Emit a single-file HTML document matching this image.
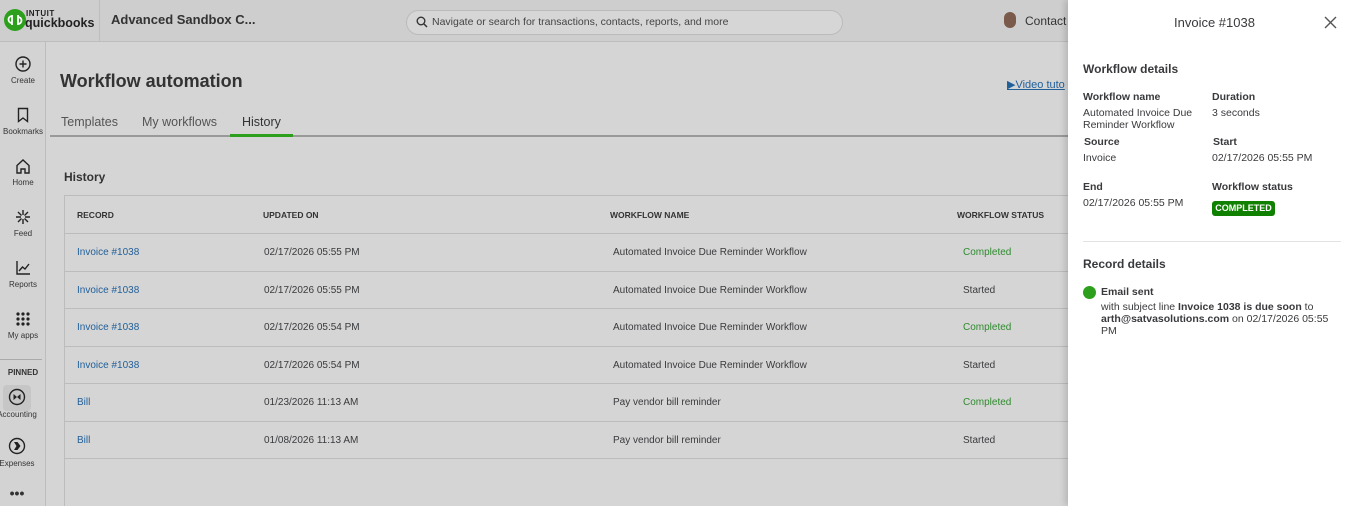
<!DOCTYPE html>
<html style="width:1349px;height:506px;overflow:hidden"><head><style>
*{box-sizing:border-box;margin:0;padding:0}
body{width:1349px;height:506px;overflow:hidden;background:#d5d5d5;font-family:"Liberation Sans",sans-serif;position:relative;color:#393a3d}
.abs{position:absolute}
.hdr{left:0;top:0;width:1349px;height:42px;background:#cecece;border-bottom:1px solid #bdbdbd}
.logo{left:0;top:0;width:100px;height:42px;border-right:1px solid #bdbdbd}
.side{left:0;top:42px;width:46px;height:464px;border-right:1px solid #bdbdbd;background:#d3d3d3}
.si{position:absolute;left:0;width:46px;text-align:center;font-size:8px;color:#333}
.si svg{display:block;margin:0 auto 4px}
.tab{font-size:12.5px;color:#555;top:115px}
.row{position:absolute;left:65px;width:1010px;height:38px;border-bottom:1px solid #bcbcbc;font-size:10px}
.row span{position:absolute;top:13px}
.lnk{color:#1f5f9a}
.grn{color:#2e8b2e}
.pl{font-size:10.5px;color:#393a3d}
.pl b{font-weight:bold;color:#393a3d}
</style></head><body>
<div class="abs hdr"></div>
<div class="abs logo">
<svg class="abs" style="left:4px;top:9px" width="22" height="22" viewBox="0 0 22 22"><circle cx="11" cy="11" r="11" fill="#2ca01c"/><path d="M8 6v10M8 7a3.5 3.5 0 1 0 0 7M14 6v10M14 8a3.5 3.5 0 1 1 0 7" stroke="#fff" stroke-width="1.8" fill="none"/></svg>
<div class="abs" style="left:26px;top:9px;font-size:8px;font-weight:bold;letter-spacing:.5px;color:#222">INTUIT</div>
<div class="abs" style="left:25px;top:16px;font-size:12.5px;font-weight:bold;color:#222">quickbooks</div>
</div>
<div class="abs" style="left:111px;top:12px;font-size:13px;font-weight:bold;color:#333">Advanced Sandbox C...</div>
<div class="abs" style="left:406px;top:10px;width:437px;height:25px;border:1px solid #bbb;border-radius:13px;background:#d6d6d6"></div>
<svg class="abs" style="left:416px;top:16px" width="12" height="12" viewBox="0 0 12 12"><circle cx="5" cy="5" r="3.8" stroke="#333" stroke-width="1.4" fill="none"/><path d="M8 8l3 3" stroke="#333" stroke-width="1.5"/></svg>
<div class="abs" style="left:432px;top:16px;font-size:10.5px;color:#444">Navigate or search for transactions, contacts, reports, and more</div>
<div class="abs" style="left:1004px;top:12px;width:12px;height:16px;border-radius:6px;background:#7a5a4a"></div>
<div class="abs" style="left:1025px;top:14px;font-size:12px;color:#333">Contact</div>

<div class="abs side">
<div class="si" style="top:14px"><svg width="16" height="16"><circle cx="8" cy="8" r="7" stroke="#222" stroke-width="1.4" fill="none"/><path d="M8 4.5v7M4.5 8h7" stroke="#222" stroke-width="1.4"/></svg>Create</div>
<div class="si" style="top:65px"><svg width="16" height="16"><path d="M3.5 1.5h9v13l-4.5-3.5-4.5 3.5z" stroke="#222" stroke-width="1.4" fill="none"/></svg>Bookmarks</div>
<div class="si" style="top:116px"><svg width="16" height="16"><path d="M2 7.5L8 2l6 5.5V15H10v-4H6v4H2z" stroke="#222" stroke-width="1.4" fill="none"/></svg>Home</div>
<div class="si" style="top:167px"><svg width="16" height="16"><path d="M8 1v5M8 10v5M1 8h5M10 8h5M3 3l3.5 3.5M13 3l-3.5 3.5M3 13l3.5-3.5M13 13l-3.5-3.5" stroke="#222" stroke-width="1.4"/></svg>Feed</div>
<div class="si" style="top:218px"><svg width="16" height="16"><path d="M2 1v13h13M4 11l3.5-4 2.5 2 4-5" stroke="#222" stroke-width="1.4" fill="none"/></svg>Reports</div>
<div class="si" style="top:269px"><svg width="16" height="16" fill="#222"><circle cx="3" cy="3" r="1.6"/><circle cx="8" cy="3" r="1.6"/><circle cx="13" cy="3" r="1.6"/><circle cx="3" cy="8" r="1.6"/><circle cx="8" cy="8" r="1.6"/><circle cx="13" cy="8" r="1.6"/><circle cx="3" cy="13" r="1.6"/><circle cx="8" cy="13" r="1.6"/><circle cx="13" cy="13" r="1.6"/></svg>My apps</div>
<div class="abs" style="left:0;top:317px;width:42px;border-top:1px solid #aaa"></div>
<div class="si" style="top:326px;font-weight:bold;font-size:8px">PINNED</div>
<div class="abs" style="left:3px;top:343px;width:28px;height:26px;background:#c6c6c6;border-radius:4px"></div>
<div class="si" style="top:346px;left:-6px"><svg width="18" height="18"><circle cx="9" cy="9" r="7.5" stroke="#222" stroke-width="1.4" fill="none"/><path d="M5.5 6v6l3.5-3 3.5 3V6l-3.5 3z" fill="#222"/></svg>Accounting</div>
<div class="si" style="top:395px;left:-6px"><svg width="18" height="18"><circle cx="9" cy="9" r="7.5" stroke="#222" stroke-width="1.4" fill="none"/><path d="M6 5h3.5l3 4-3 4H6l2.5-4z" fill="#222"/></svg>Expenses</div>
<div class="si" style="top:443px;left:-6px;font-size:14px;font-weight:bold">•••</div>
</div>

<div class="abs" style="left:60px;top:71px;font-size:18px;font-weight:bold;color:#333">Workflow automation</div>
<div class="abs" style="left:1007px;top:78px;font-size:11px;color:#1f5f9a;text-decoration:underline">&#9654;Video tuto</div>
<div class="abs tab" style="left:61px">Templates</div>
<div class="abs tab" style="left:142px">My workflows</div>
<div class="abs tab" style="left:242px;color:#333">History</div>
<div class="abs" style="left:50px;top:135px;width:1030px;border-top:2px solid #999"></div>
<div class="abs" style="left:230px;top:134px;width:63px;height:3px;background:#2ca01c"></div>
<div class="abs" style="left:64px;top:170px;font-size:12px;font-weight:bold;color:#333">History</div>
<div class="abs" style="left:64px;top:195px;width:1020px;height:311px;border:1px solid #bcbcbc;border-right:none;border-bottom:none"></div>
<div class="row" style="top:196px;font-size:8.5px;font-weight:bold;color:#333"><span style="left:12px;top:14px">RECORD</span><span style="left:198px;top:14px">UPDATED ON</span><span style="left:545px;top:14px">WORKFLOW NAME</span><span style="left:892px;top:14px">WORKFLOW STATUS</span></div>
<div class="row" style="top:234px"><span class="lnk" style="left:12px">Invoice #1038</span><span style="left:199px">02/17/2026 05:55 PM</span><span style="left:548px">Automated Invoice Due Reminder Workflow</span><span class="grn" style="left:898px">Completed</span></div>
<div class="row" style="top:272px;height:37px"><span class="lnk" style="left:12px">Invoice #1038</span><span style="left:199px">02/17/2026 05:55 PM</span><span style="left:548px">Automated Invoice Due Reminder Workflow</span><span style="left:898px">Started</span></div>
<div class="row" style="top:309px"><span class="lnk" style="left:12px">Invoice #1038</span><span style="left:199px">02/17/2026 05:54 PM</span><span style="left:548px">Automated Invoice Due Reminder Workflow</span><span class="grn" style="left:898px">Completed</span></div>
<div class="row" style="top:347px;height:37px"><span class="lnk" style="left:12px">Invoice #1038</span><span style="left:199px">02/17/2026 05:54 PM</span><span style="left:548px">Automated Invoice Due Reminder Workflow</span><span style="left:898px">Started</span></div>
<div class="row" style="top:384px"><span class="lnk" style="left:12px">Bill</span><span style="left:199px">01/23/2026 11:13 AM</span><span style="left:548px">Pay vendor bill reminder</span><span class="grn" style="left:898px">Completed</span></div>
<div class="row" style="top:422px;height:37px"><span class="lnk" style="left:12px">Bill</span><span style="left:199px">01/08/2026 11:13 AM</span><span style="left:548px">Pay vendor bill reminder</span><span style="left:898px">Started</span></div>

<div class="abs" style="left:1068px;top:0;width:281px;height:506px;background:#fff;box-shadow:-3px 0 6px rgba(0,0,0,.15)">
<div class="abs" style="left:106px;top:15px;font-size:13px;color:#393a3d">Invoice #1038</div>
<svg class="abs" style="left:256px;top:16px" width="13" height="13"><path d="M1 1l11 11M12 1L1 12" stroke="#555" stroke-width="1.4"/></svg>
<div class="abs" style="left:15px;top:62px;font-size:12px;font-weight:bold">Workflow details</div>
<div class="abs pl" style="left:15px;top:91px"><b>Workflow name</b></div>
<div class="abs pl" style="left:15px;top:107px;line-height:12px">Automated Invoice Due<br>Reminder Workflow</div>
<div class="abs pl" style="left:144px;top:91px"><b>Duration</b></div>
<div class="abs pl" style="left:144px;top:107px">3 seconds</div>
<div class="abs pl" style="left:16px;top:136px"><b>Source</b></div>
<div class="abs pl" style="left:15px;top:152px">Invoice</div>
<div class="abs pl" style="left:145px;top:136px"><b>Start</b></div>
<div class="abs pl" style="left:144px;top:152px">02/17/2026 05:55 PM</div>
<div class="abs pl" style="left:15px;top:181px"><b>End</b></div>
<div class="abs pl" style="left:15px;top:197px">02/17/2026 05:55 PM</div>
<div class="abs pl" style="left:144px;top:181px"><b>Workflow status</b></div>
<div class="abs" style="left:144px;top:201px;width:63px;height:15px;background:#108000;border-radius:3px;color:#fff;font-size:9px;font-weight:bold;text-align:center;line-height:15px">COMPLETED</div>
<div class="abs" style="left:15px;top:241px;width:258px;border-top:1px solid #e3e3e3"></div>
<div class="abs" style="left:15px;top:257px;font-size:12px;font-weight:bold">Record details</div>
<div class="abs" style="left:15px;top:286px;width:13px;height:13px;border-radius:50%;background:#2ca01c"></div>
<div class="abs pl" style="left:33px;top:286px"><b>Email sent</b></div>
<div class="abs pl" style="left:33px;top:301px;line-height:12px;width:245px">with subject line <b>Invoice 1038 is due soon</b> to <b>arth@satvasolutions.com</b> on 02/17/2026 05:55 PM</div>
</div>
</body></html>
